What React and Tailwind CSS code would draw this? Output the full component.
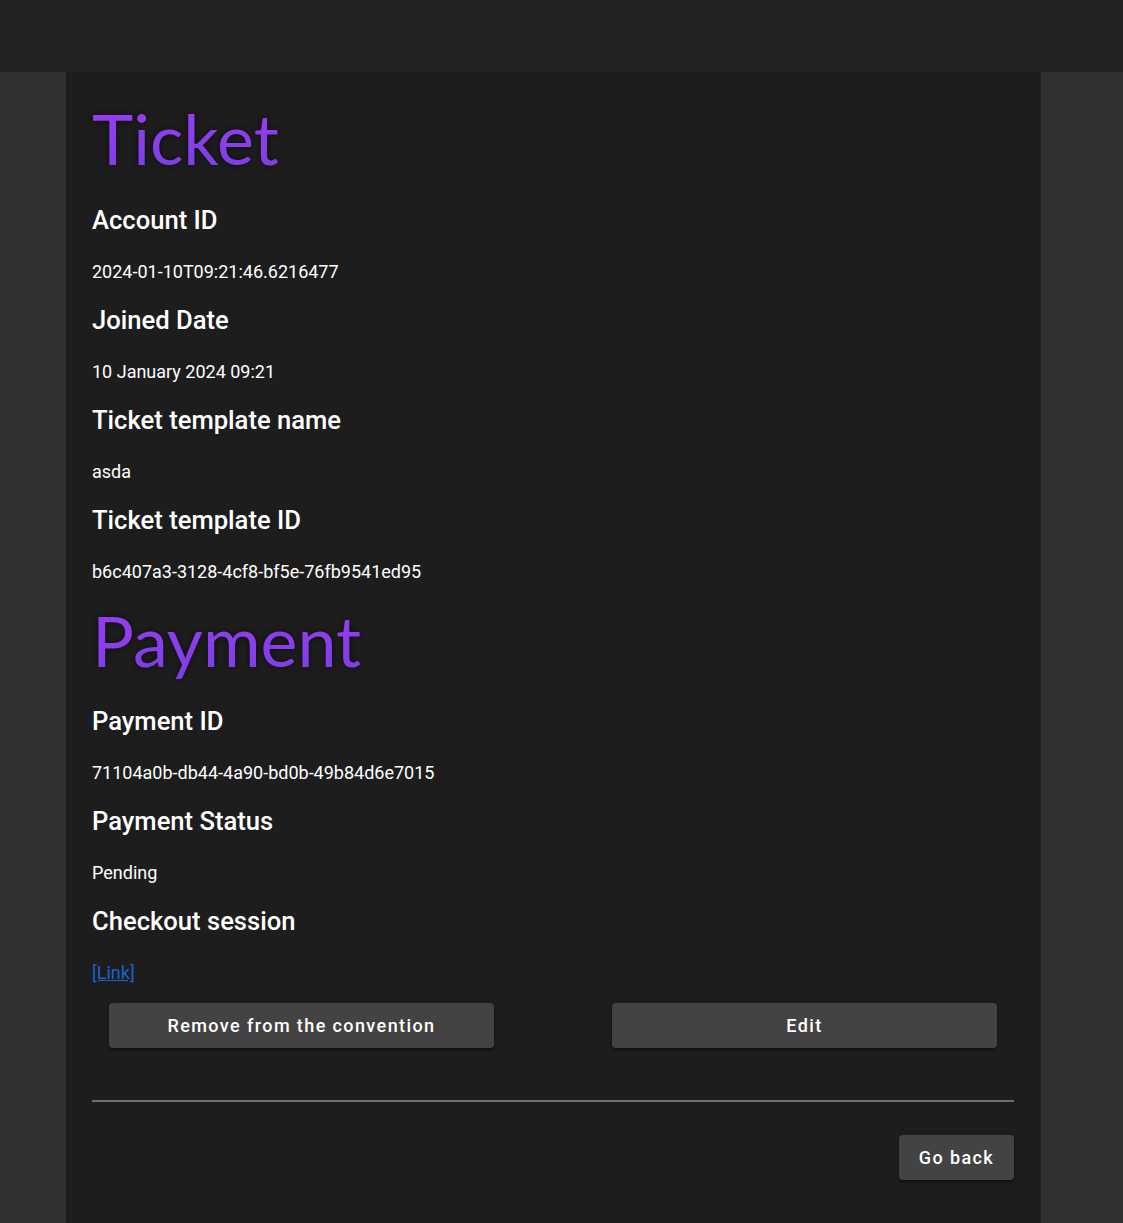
import React from "react";

const Title = ({ children, className = "" }) => (
  <h1
    className={`font-['Lato',sans-serif] text-[70px] leading-[84px] font-normal bg-gradient-to-b from-[#9d3cf3] to-[#793fe2] bg-clip-text text-transparent w-fit drop-shadow-[0_0_3px_rgba(0,0,0,0.6)] ${className}`}
  >
    {children}
  </h1>
);

const Field = ({ label, children }) => (
  <div>
    <h2 className="text-[25.6px] leading-[32px] font-medium text-white mb-6">{label}</h2>
    <div className="text-[18px] leading-[24px] text-white mb-5">{children}</div>
  </div>
);

const Btn = ({ children, className = "" }) => (
  <button
    className={`h-[45px] rounded-[4px] bg-[#434343] text-white text-[18px] font-medium tracking-[1.4px] shadow-[0_2px_3px_rgba(0,0,0,0.45)] ${className}`}
  >
    {children}
  </button>
);

export default function App() {
  return (
    <div className="min-h-[1223px] bg-[#303030] font-['Roboto',sans-serif]">
      <div className="h-[72px] bg-[#222222]" />
      <div className="ml-[66px] w-[975px] min-h-[1151px] bg-[#1d1d1d] pl-[26px] pr-[27px] pt-[24px] pb-[40px]">
        <Title className="mb-6">Ticket</Title>
        <Field label="Account ID">2024-01-10T09:21:46.6216477</Field>
        <Field label="Joined Date">10 January 2024 09:21</Field>
        <Field label="Ticket template name">asda</Field>
        <Field label="Ticket template ID">b6c407a3-3128-4cf8-bf5e-76fb9541ed95</Field>
        <Title className="-mt-[6px] mb-[23px]">Payment</Title>
        <Field label="Payment ID">71104a0b-db44-4a90-bd0b-49b84d6e7015</Field>
        <Field label="Payment Status">Pending</Field>
        <div>
          <h2 className="text-[25.6px] leading-[32px] font-medium text-white mb-6">Checkout session</h2>
          <a href="#" className="block w-fit text-[18px] leading-[24px] text-[#1a63cf] underline">
            [Link]
          </a>
        </div>
        <div className="flex justify-between px-[17px] mt-[18px]">
          <Btn className="w-[385px]">Remove from the convention</Btn>
          <Btn className="w-[385px]">Edit</Btn>
        </div>
        <div className="mt-[52px] h-[2px] bg-[#6e6e6e]" />
        <div className="flex justify-end mt-[33px]">
          <Btn className="w-[115px]">Go back</Btn>
        </div>
      </div>
    </div>
  );
}
